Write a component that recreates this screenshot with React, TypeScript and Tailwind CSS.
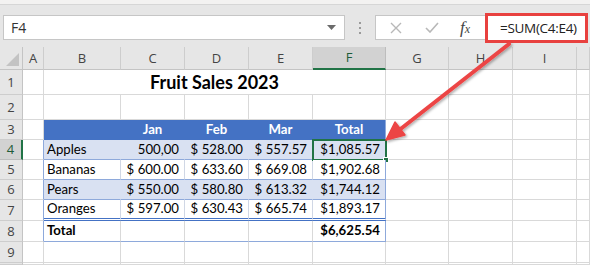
import React from "react";

const COLS = ["A", "B", "C", "D", "E", "F", "G", "H", "I", ""];
const ROW_LABELS = ["1", "2", "3", "4", "5", "6", "7", "8", "9", ""];

type Row = { label: string; c: string; d: string; e: string; f: string };

const DATA: Row[] = [
  { label: "Apples", c: "500,00", d: "$ 528.00", e: "$ 557.57", f: "$1,085.57" },
  { label: "Bananas", c: "$ 600.00", d: "$ 633.60", e: "$ 669.08", f: "$1,902.68" },
  { label: "Pears", c: "$ 550.00", d: "$ 580.80", e: "$ 613.32", f: "$1,744.12" },
  { label: "Oranges", c: "$ 597.00", d: "$ 630.43", e: "$ 665.74", f: "$1,893.17" },
];

const cellFont = "font-['Lato','Liberation_Sans',sans-serif] text-[13.2px] text-black leading-none";
const headFont = "font-['Open_Sans','Noto_Sans',sans-serif] text-[13px] text-[#444] leading-none";

function FormulaBar() {
  return (
    <div className="flex flex-col">
      <div className="h-[4px] bg-[#f3f2f1]" />
      <div className="h-[43px] bg-[#e6e6e6] border-t border-[#d6d6d6] flex items-start">
        <div className="ml-[3px] mt-[10px] w-[342px] h-[25px] bg-white border border-[#c6c6c6] flex items-center justify-between pl-[7px] pr-[8px]">
          <span className="font-['Open_Sans','Noto_Sans',sans-serif] text-[14px] text-[#333]">F4</span>
          <svg width="9" height="5" viewBox="0 0 9 5">
            <path d="M0 0 L9 0 L4.5 5 Z" fill="#6b6b6b" />
          </svg>
        </div>
        <div className="w-[30px] mt-[17px] flex flex-col items-center gap-[3px]">
          <span className="w-[2px] h-[2px] bg-[#9a9a9a]" />
          <span className="w-[2px] h-[2px] bg-[#9a9a9a]" />
          <span className="w-[2px] h-[2px] bg-[#9a9a9a]" />
        </div>
        <div className="mt-[10px] w-[110px] h-[25px] bg-white border border-[#c6c6c6] border-r-0 flex items-center">
          <svg className="ml-[14px]" width="12" height="12" viewBox="0 0 12 12">
            <path d="M1 1 L11 11 M11 1 L1 11" stroke="#b8b8b8" strokeWidth="1.4" fill="none" />
          </svg>
          <svg className="ml-[23px]" width="14" height="11" viewBox="0 0 14 11">
            <path d="M1 6 L5 10 L13 1" stroke="#b8b8b8" strokeWidth="1.6" fill="none" />
          </svg>
          <span className="ml-[21px] font-['Liberation_Serif',serif] italic text-[17px] text-[#444] leading-none">
            f<span className="text-[12px]">x</span>
          </span>
        </div>
        <div className="mt-[8px] w-[103px] h-[30px] bg-white border-[3px] border-[#e8413f] flex items-center pl-[12px]">
          <span className="font-['Open_Sans','Noto_Sans',sans-serif] text-[13.5px] text-[#222] tracking-[-0.3px]">
            =SUM(C4:E4)
          </span>
        </div>
      </div>
    </div>
  );
}

function ColHeader({ letter }: { letter: string }) {
  const selected = letter === "F";
  return (
    <div
      className={
        selected
          ? `${headFont} bg-[#d2d2d2] border-b-2 border-b-[#217346] border-r border-r-[#bdbdbd] flex items-center justify-center !text-[#1e5c38]`
          : `${headFont} bg-[#e6e6e6] border-b border-b-[#c4c4c4] border-r border-r-[#cdcdcd] flex items-center justify-center`
      }
    >
      {letter}
    </div>
  );
}

function RowHeader({ n }: { n: string }) {
  const selected = n === "4";
  return (
    <div
      className={
        selected
          ? `${headFont} bg-[#d2d2d2] border-r-2 border-r-[#217346] border-b border-b-[#bdbdbd] flex items-center justify-center !text-[#1e5c38]`
          : `${headFont} bg-[#e6e6e6] border-r border-r-[#c4c4c4] border-b border-b-[#cdcdcd] flex items-center justify-center`
      }
    >
      {n}
    </div>
  );
}

const plain = "bg-white border-r border-b border-[#d9d9d9]";

function TableRow({ row, band, last }: { row: Row; band: boolean; last: boolean }) {
  const bg = band ? "bg-[#d9e1f2]" : "bg-white";
  const inner = band ? "border-r-[#d9e1f2]" : "border-r-[#d0d7e5]";
  const bottom = last
    ? "border-b-[3px] border-double border-b-[#4472c4]"
    : "border-b border-b-[#8ea9db]";
  const base = `${cellFont} ${bg} border-r ${bottom} flex items-center`;
  return (
    <>
      <div className="bg-white border-b border-b-[#d9d9d9] border-r border-r-[#8ea9db]" />
      <div className={`${base} ${inner} pl-[3px]`}>{row.label}</div>
      <div className={`${base} ${inner} justify-end pr-[5px]`}>{row.c}</div>
      <div className={`${base} ${inner} justify-end pr-[5px]`}>{row.d}</div>
      <div className={`${base} ${inner} justify-end pr-[5px]`}>{row.e}</div>
      <div className={`${base} border-r-[#8ea9db] justify-end pr-[5px] relative`}>
        {row.label === "Apples" && (
          <div className="absolute -left-px -top-px right-[-2px] bottom-[-2px] border-2 border-[#217346]">
            <div className="absolute right-[-4px] bottom-[-4px] w-[6px] h-[6px] bg-[#217346] border border-white" />
          </div>
        )}
        {row.f}
      </div>
      <div className={plain} />
      <div className={plain} />
      <div className={plain} />
      <div className={plain} />
    </>
  );
}

function Sheet() {
  return (
    <div className="grid grid-cols-[23px_21px_77px_64px_64px_64px_73px_63px_64px_64px_1fr] grid-rows-[23px_25px_25px_20px_20px_20px_20px_21px_21px_21px_1fr] h-[218px] overflow-hidden">
      {/* header row */}
      <div className="bg-[#e6e6e6] border-r border-r-[#c4c4c4] border-b border-b-[#c4c4c4] relative">
        <svg className="absolute right-[3px] bottom-[3px]" width="13" height="13" viewBox="0 0 13 13">
          <path d="M13 0 L13 13 L0 13 Z" fill="#c3c3c3" />
        </svg>
      </div>
      {COLS.map((c, i) => (
        <ColHeader key={i} letter={c} />
      ))}

      {/* row 1 */}
      <RowHeader n={ROW_LABELS[0]} />
      <div className={plain} />
      <div className="col-span-5 bg-white border-r border-b border-[#d9d9d9] flex items-center justify-center font-['Lato','Liberation_Sans',sans-serif] font-bold text-[18px] text-black">
        Fruit Sales 2023
      </div>
      <div className={plain} />
      <div className={plain} />
      <div className={plain} />
      <div className={plain} />

      {/* row 2 */}
      <RowHeader n={ROW_LABELS[1]} />
      {COLS.map((_, i) => (
        <div key={i} className={plain} />
      ))}

      {/* row 3: table header */}
      <RowHeader n={ROW_LABELS[2]} />
      <div className={plain} />
      {["", "Jan", "Feb", "Mar", "Total"].map((h, i) => (
        <div
          key={i}
          className={`${cellFont} bg-[#4472c4] !text-white font-bold flex items-center justify-center border-r ${i === 4 ? "border-r-[#8ea9db]" : "border-r-[#4472c4]"}`}
        >
          {h}
        </div>
      ))}
      <div className={plain} />
      <div className={plain} />
      <div className={plain} />
      <div className={plain} />

      {/* rows 4-7 */}
      {DATA.map((row, i) => (
        <React.Fragment key={row.label}>
          <RowHeader n={ROW_LABELS[3 + i]} />
          <TableRow row={row} band={i % 2 === 0} last={i === 3} />
        </React.Fragment>
      ))}

      {/* row 8: total */}
      <RowHeader n={ROW_LABELS[7]} />
      <div className="bg-white border-b border-b-[#d9d9d9] border-r border-r-[#8ea9db]" />
      <div className={`${cellFont} font-bold bg-white border-r border-r-[#d9d9d9] border-b border-b-[#8ea9db] flex items-center pl-[3px]`}>
        Total
      </div>
      <div className="bg-white border-r border-r-[#d9d9d9] border-b border-b-[#8ea9db]" />
      <div className="bg-white border-r border-r-[#d9d9d9] border-b border-b-[#8ea9db]" />
      <div className="bg-white border-r border-r-[#d9d9d9] border-b border-b-[#8ea9db]" />
      <div className={`${cellFont} font-bold bg-white border-r border-r-[#8ea9db] border-b border-b-[#8ea9db] flex items-center justify-end pr-[5px]`}>
        $6,625.54
      </div>
      <div className={plain} />
      <div className={plain} />
      <div className={plain} />
      <div className={plain} />

      {/* rows 9-10 */}
      {[8, 9].map((r) => (
        <React.Fragment key={r}>
          <RowHeader n={ROW_LABELS[r]} />
          {COLS.map((_, i) => (
            <div key={i} className={plain} />
          ))}
        </React.Fragment>
      ))}
    </div>
  );
}

function Arrow() {
  return (
    <svg className="absolute left-0 top-0 pointer-events-none" width="590" height="265" viewBox="0 0 590 265">
      <defs>
        <filter id="sh" x="-10%" y="-10%" width="130%" height="130%">
          <feDropShadow dx="1.5" dy="1.5" stdDeviation="1.2" floodColor="#000" floodOpacity="0.3" />
        </filter>
      </defs>
      <g filter="url(#sh)">
        <line x1="509" y1="44" x2="398" y2="131" stroke="#ec4545" strokeWidth="4" strokeLinecap="round" />
        <path d="M386 140 L405 135 L395 122 Z" fill="#ec4545" stroke="#ec4545" strokeWidth="1.5" strokeLinejoin="round" />
      </g>
    </svg>
  );
}

export default function App() {
  return (
    <div className="relative w-[590px] h-[265px] overflow-hidden bg-white">
      <FormulaBar />
      <Sheet />
      <Arrow />
    </div>
  );
}
